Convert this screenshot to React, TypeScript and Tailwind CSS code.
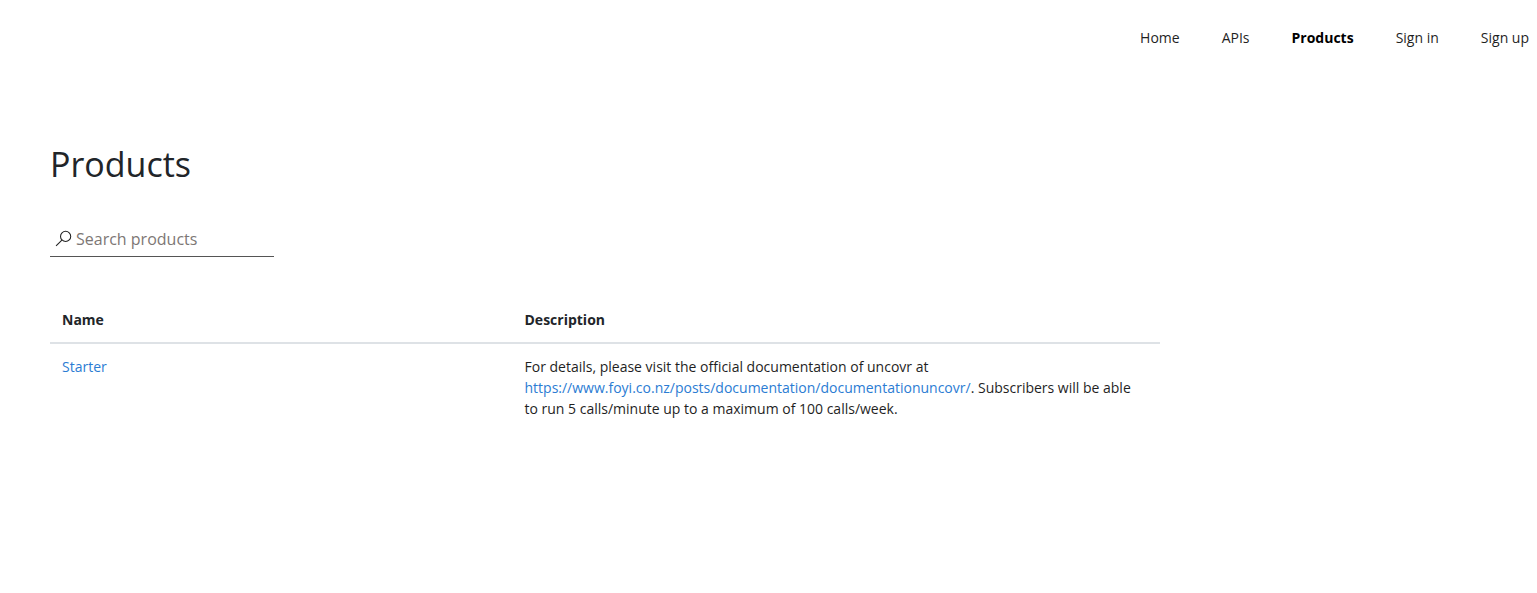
const navItems = [
  { label: "Home", active: false },
  { label: "APIs", active: false },
  { label: "Products", active: true },
  { label: "Sign in", active: false },
  { label: "Sign up", active: false },
];

export default function App() {
  return (
    <div className="min-h-[593px] bg-white font-['Open_Sans',sans-serif] text-[14px] text-[#1f1f1f]">
      <nav className="flex h-[75px] items-center justify-end gap-[42px] pr-[8px]">
        {navItems.map((item) => (
          <a
            key={item.label}
            className={`leading-[20px] ${item.active ? "font-bold text-black" : "text-[#1f1f1f]"}`}
          >
            {item.label}
          </a>
        ))}
      </nav>

      <main className="px-[50px] pt-[67px]">
        <h1 className="text-[34px] leading-[44px] text-[#212529]">Products</h1>

        <div className="mt-[35px] flex h-[36px] w-[224px] items-center gap-[4px] border-b border-[#555] pl-[5px]">
          <svg viewBox="0 0 16 16" className="h-[17px] w-[17px]" fill="none" stroke="#222" strokeWidth="1">
            <circle cx="10" cy="6" r="4.8" />
            <path d="M6.5 9.5L1 15" />
          </svg>
          <span className="text-[16px] text-[#7d7775]">Search products</span>
        </div>

        <div className="mt-[41px] w-[1110px]">
          <div className="grid grid-cols-[462.5px_1fr] border-b-2 border-[#dee2e6] font-bold text-[#212529]">
            <div className="p-[12px] leading-[20px]">Name</div>
            <div className="p-[12px] leading-[20px]">Description</div>
          </div>
          <div className="grid grid-cols-[462.5px_1fr]">
            <div className="p-[12px] leading-[21px]">
              <a className="text-[#2b7cd3]">Starter</a>
            </div>
            <div className="py-[12px] pl-[12px] pr-[16px] leading-[21px]">
              For details, please visit the official documentation of uncovr at{" "}
              <a className="text-[#2b7cd3]">https://www.foyi.co.nz/posts/documentation/documentationuncovr/</a>
              . Subscribers will be able to run 5 calls/minute up to a maximum of 100 calls/week.
            </div>
          </div>
        </div>
      </main>
    </div>
  );
}
